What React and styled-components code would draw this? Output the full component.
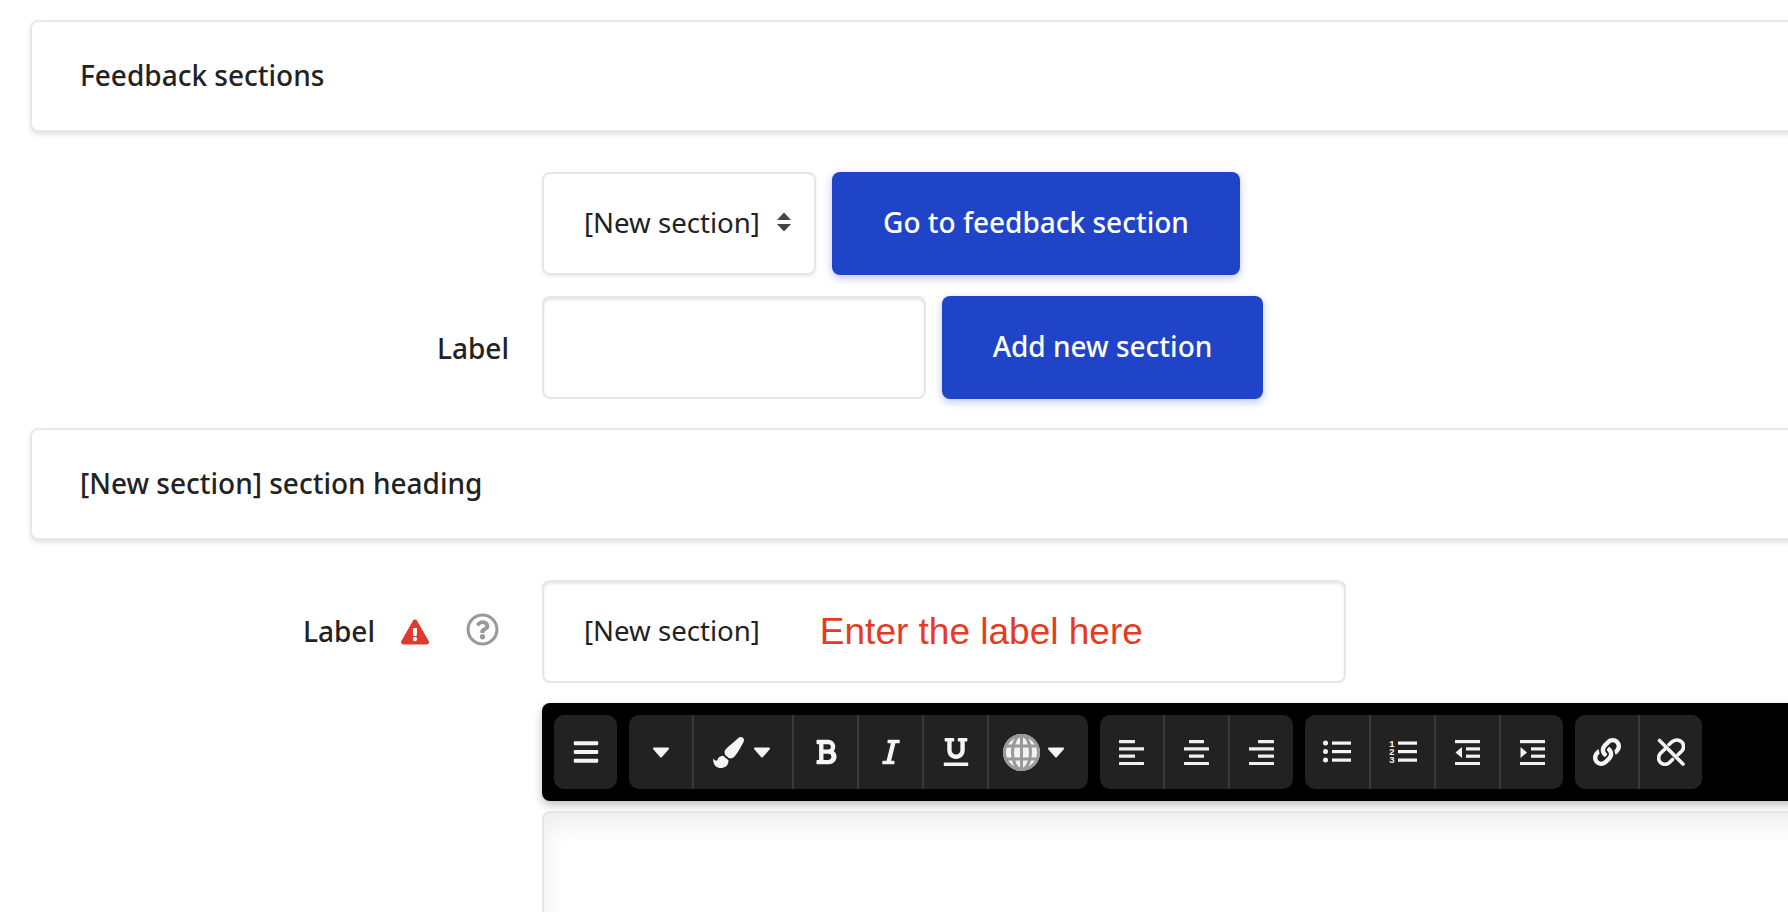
import React from 'react';
import styled, { createGlobalStyle } from 'styled-components';
import {
  FaBars, FaPaintBrush, FaBold, FaItalic, FaUnderline,
  FaLink, FaExclamationTriangle, FaRegQuestionCircle,
} from 'react-icons/fa';

const Global = createGlobalStyle`
  html, body {
    margin: 0;
    height: 912px;
    overflow: hidden;
    background: #fff;
  }
  body {
    font-family: "Noto Sans", sans-serif;
    color: #222;
  }
`;

const Page = styled.div`
  width: 2000px;
  padding: 20px 0 0 30px;
`;

const SectionCard = styled.div`
  height: 112px;
  display: flex;
  align-items: center;
  padding: 0 0 2px 48px;
  background: #fff;
  border: 2px solid #e6e8f0;
  border-radius: 8px;
  box-shadow: 0 3px 4px rgba(30, 40, 80, 0.12);
  font-size: 28px;
  font-weight: 500;
  box-sizing: border-box;
  margin-bottom: ${(p) => p.$after}px;
`;

const FormRow = styled.div`
  display: grid;
  grid-template-columns: 512px 1fr;
  margin-bottom: ${(p) => p.$after}px;
`;

const LabelCell = styled.div`
  display: flex;
  align-items: center;
  justify-content: flex-end;
  padding-right: 33px;
  font-size: 28px;
  font-weight: 500;
`;

const LabelText = styled.span`
  margin-top: ${(p) => p.$lift || 0}px;
`;

const Controls = styled.div`
  display: flex;
  gap: 16px;
`;

const Select = styled.div`
  width: 274px;
  height: 103px;
  box-sizing: border-box;
  border: 2px solid #e6e6e6;
  border-radius: 8px;
  box-shadow: 0 2px 3px rgba(0, 0, 0, 0.07);
  display: flex;
  align-items: center;
  padding: 0 0 4px 40px;
  font-size: 27.6px;
  gap: 16px;
`;

const TextBox = styled.div`
  width: ${(p) => p.$width}px;
  height: 103px;
  box-sizing: border-box;
  border: 2px solid #e6e6e6;
  border-radius: 8px;
  box-shadow: inset 0 2px 3px rgba(0, 0, 0, 0.1);
  display: flex;
  align-items: center;
  padding: 0 0 3px 40px;
  font-size: 27.6px;
`;

const Button = styled.div`
  width: ${(p) => p.$width}px;
  height: 103px;
  box-sizing: border-box;
  padding-bottom: 4px;
  display: flex;
  align-items: center;
  justify-content: center;
  background: #1f44c8;
  color: #fff;
  border-radius: 8px;
  font-size: 28px;
  font-weight: 500;
  box-shadow: 0 3px 8px rgba(31, 68, 200, 0.3);
`;

const Hint = styled.span`
  margin: 3px 0 0 60px;
  font-family: "Liberation Sans", sans-serif;
  font-size: 37px;
  color: #e63a24;
`;

const Warn = styled(FaExclamationTriangle)`
  color: #e03a2e;
  font-size: 28px;
  margin: 0 0 0 26px;
`;

const Help = styled(FaRegQuestionCircle)`
  color: #999;
  font-size: 33px;
  margin: -4px 10px 0 37px;
`;

const Toolbar = styled.div`
  margin-left: 512px;
  height: 98px;
  box-sizing: border-box;
  padding: 12px;
  display: flex;
  gap: 12px;
  background: #000;
  border-radius: 8px 0 0 8px;
  box-shadow: 0 4px 10px rgba(0, 0, 0, 0.25);
`;

const ButtonGroup = styled.div`
  display: flex;
  height: 74px;
  background: #222;
  border-radius: 10px;
  overflow: hidden;
`;

const ToolButton = styled.div`
  width: ${(p) => p.$width || 65}px;
  padding-right: ${(p) => p.$shift || 0}px;
  display: flex;
  align-items: center;
  justify-content: center;
  gap: ${(p) => p.$gap || 9}px;
  color: #f5f5f5;
  font-size: 28px;
  box-sizing: border-box;
  & + & {
    border-left: 2px solid #3a3a3a;
  }
`;

const Brush = styled(FaPaintBrush)`
  font-size: 31px;
`;

const Editor = styled.div`
  margin: 10px 0 0 512px;
  height: 200px;
  border: 2px solid #e6e6e6;
  border-radius: 8px;
  box-shadow: inset 0 12px 24px rgba(0, 0, 0, 0.07);
`;

const Spinner = () => (
  <svg width="16" height="20" viewBox="0 0 16 20">
    <path d="M8 0.5L15 8H1z M1 12h14l-7 7.5z" fill="#444" />
  </svg>
);

const Caret = () => (
  <svg width="18" height="11" viewBox="0 0 18 11">
    <path d="M2 1.5h14L9 9.5z" fill="#f5f5f5" stroke="#f5f5f5" strokeWidth="2" strokeLinejoin="round" />
  </svg>
);

const Globe = () => (
  <svg width="37" height="37" viewBox="0 0 37 37">
    <circle cx="18.5" cy="18.5" r="18.5" fill="#f2f2f2" />
    <g stroke="#999" strokeWidth="3" fill="none">
      <circle cx="18.5" cy="18.5" r="17" />
      <path d="M2 12h33M2 25h33M18.5 1v35" />
      <ellipse cx="18.5" cy="18.5" rx="9" ry="17" />
    </g>
  </svg>
);

// rows of lines used by the align icons: [x, width]
const alignRows = {
  left: [[0, 16], [0, 25], [0, 16], [0, 25]],
  center: [[5, 15], [0, 25], [5, 15], [0, 25]],
  right: [[9, 16], [0, 25], [9, 16], [0, 25]],
};

const Align = ({ to }) => (
  <svg width="25" height="25" viewBox="0 0 25 25" fill="#f0f0f0">
    {alignRows[to].map(([x, w], i) => (
      <rect key={i} x={x} y={i * 7.3} width={w} height="3.2" rx="0.6" />
    ))}
  </svg>
);

const ListLines = () => (
  <g fill="#f5f5f5">
    <rect x="9" y="1.5" width="19" height="3.2" />
    <rect x="9" y="10" width="19" height="3.2" />
    <rect x="9" y="18.5" width="19" height="3.2" />
  </g>
);

const Bullets = () => (
  <svg width="28" height="24" viewBox="0 0 28 24" fill="#f5f5f5">
    <circle cx="2.5" cy="3" r="2.5" />
    <circle cx="2.5" cy="11.5" r="2.5" />
    <circle cx="2.5" cy="20" r="2.5" />
    <ListLines />
  </svg>
);

const Numbers = () => (
  <svg width="28" height="30" viewBox="0 -3 28 30" fill="#f5f5f5">
    <g fontFamily="Liberation Mono, monospace" fontWeight="700" fontSize="9.5">
      <text x="0" y="7">1</text>
      <text x="0" y="15">2</text>
      <text x="0" y="23">3</text>
    </g>
    <ListLines />
  </svg>
);

const IndentIcon = ({ out }) => (
  <svg width="25" height="25" viewBox="0 0 25 25" fill="#f0f0f0">
    <rect y="0" width="25" height="3.2" />
    <rect x="11" y="7.3" width="14" height="3.2" />
    <rect x="11" y="14.6" width="14" height="3.2" />
    <rect y="22" width="25" height="3.2" />
    <path d={out ? 'M7 7v11L0.5 12.5z' : 'M0.5 7v11L7 12.5z'} />
  </svg>
);

const Unlink = () => (
  <svg width="28" height="28" viewBox="0 0 28 28">
    <g fill="none" stroke="#f5f5f5" strokeWidth="3.6" strokeLinecap="round">
      <path d="M12 6.5l3.5-3c3-2.2 7-1.8 9.3 0.6c2.4 2.5 2.2 6.5 0 8.9l-3.6 3.6" />
      <path d="M7.5 11.5l-4 3.8c-2.5 2.6-2.5 6.8 0 9.2c2.5 2.4 6.5 2.4 9 0l3-3" />
      <path d="M2.5 2.5L26 26" />
    </g>
  </svg>
);

export default function App() {
  return (
    <Page>
      <Global />
      <SectionCard $after={40}>Feedback sections</SectionCard>
      <FormRow $after={21}>
        <LabelCell />
        <Controls>
          <Select>[New section]<Spinner /></Select>
          <Button $width={408}>Go to feedback section</Button>
        </Controls>
      </FormRow>
      <FormRow $after={29}>
        <LabelCell>Label</LabelCell>
        <Controls>
          <TextBox $width={384} />
          <Button $width={321}>Add new section</Button>
        </Controls>
      </FormRow>
      <SectionCard $after={40}>[New section] section heading</SectionCard>
      <FormRow $after={20}>
        <LabelCell><LabelText $lift={-2}>Label</LabelText><Warn /><Help /></LabelCell>
        <Controls>
          <TextBox $width={804}>
            [New section]<Hint>Enter the label here</Hint>
          </TextBox>
        </Controls>
      </FormRow>
      <Toolbar>
        <ButtonGroup>
          <ToolButton $width={63}><FaBars /></ToolButton>
        </ButtonGroup>
        <ButtonGroup>
          <ToolButton $width={63}><Caret /></ToolButton>
          <ToolButton $width={100} $shift={3}><Brush /><Caret /></ToolButton>
          <ToolButton><FaBold /></ToolButton>
          <ToolButton><FaItalic /></ToolButton>
          <ToolButton><FaUnderline /></ToolButton>
          <ToolButton $width={101} $gap={7} $shift={9}><Globe /><Caret /></ToolButton>
        </ButtonGroup>
        <ButtonGroup>
          <ToolButton $width={63}><Align to="left" /></ToolButton>
          <ToolButton><Align to="center" /></ToolButton>
          <ToolButton><Align to="right" /></ToolButton>
        </ButtonGroup>
        <ButtonGroup>
          <ToolButton $width={64}><Bullets /></ToolButton>
          <ToolButton><Numbers /></ToolButton>
          <ToolButton><IndentIcon out /></ToolButton>
          <ToolButton $width={64}><IndentIcon /></ToolButton>
        </ButtonGroup>
        <ButtonGroup>
          <ToolButton $width={63}><FaLink /></ToolButton>
          <ToolButton $width={64}><Unlink /></ToolButton>
        </ButtonGroup>
      </Toolbar>
      <Editor />
    </Page>
  );
}
